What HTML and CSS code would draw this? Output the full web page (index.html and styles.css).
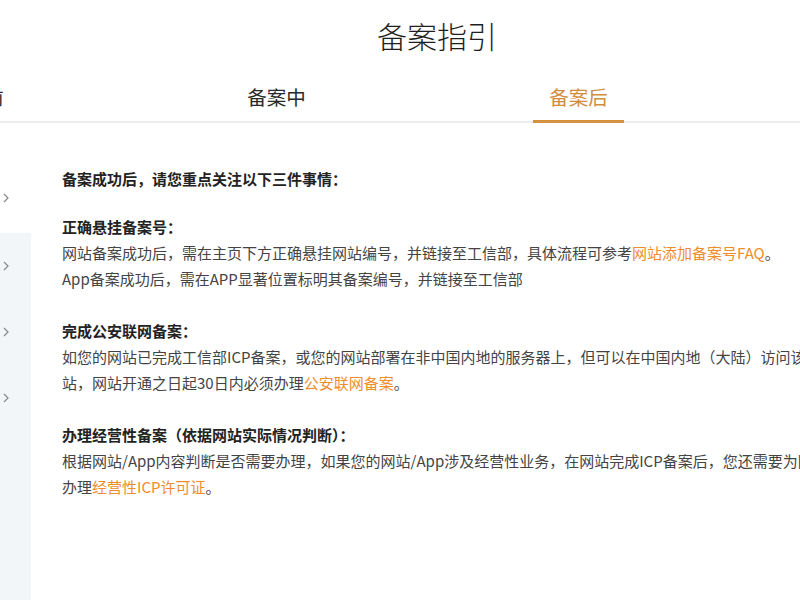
FILE: index.html
```html
<!DOCTYPE html>
<html lang="zh-CN">
<head>
<meta charset="utf-8">
<title>备案指引</title>
<link rel="stylesheet" href="styles.css">
</head>
<body>
<div class="page">
  <header class="header">
    <h1 class="title">备案指引</h1>
  </header>
  <nav class="tabs">
    <div class="tab">备案前</div>
    <div class="tab">备案中</div>
    <div class="tab active">备案后</div>
  </nav>
  <main class="main">
    <aside class="sidebar">
      <div class="side-top"><svg class="chev" viewBox="0 0 6 10" width="6" height="10"><path d="M1 1 L5 5 L1 9" fill="none" stroke="#888" stroke-width="1.2"/></svg></div>
      <div class="side-list">
        <div class="side-item"><svg class="chev" viewBox="0 0 6 10" width="6" height="10"><path d="M1 1 L5 5 L1 9" fill="none" stroke="#888" stroke-width="1.2"/></svg></div>
        <div class="side-item"><svg class="chev" viewBox="0 0 6 10" width="6" height="10"><path d="M1 1 L5 5 L1 9" fill="none" stroke="#888" stroke-width="1.2"/></svg></div>
        <div class="side-item"><svg class="chev" viewBox="0 0 6 10" width="6" height="10"><path d="M1 1 L5 5 L1 9" fill="none" stroke="#888" stroke-width="1.2"/></svg></div>
      </div>
    </aside>
    <section class="content">
      <p class="intro">备案成功后，请您重点关注以下三件事情：</p>
      <div class="block">
        <h3 class="block-title">正确悬挂备案号：</h3>
        <p>网站备案成功后，需在主页下方正确悬挂网站编号，并链接至工信部，具体流程可参考<a class="link">网站添加备案号FAQ</a>。</p>
        <p>App备案成功后，需在APP显著位置标明其备案编号，并链接至工信部</p>
      </div>
      <div class="block">
        <h3 class="block-title">完成公安联网备案：</h3>
        <p>如您的网站已完成工信部ICP备案，或您的网站部署在非中国内地的服务器上，但可以在中国内地（大陆）访问该网站，网站开通之日起30日内必须办理<a class="link">公安联网备案</a>。</p>
      </div>
      <div class="block">
        <h3 class="block-title">办理经营性备案（依据网站实际情况判断）：</h3>
        <p>根据网站/App内容判断是否需要办理，如果您的网站/App涉及经营性业务，在网站完成ICP备案后，您还需要为网站办理<a class="link">经营性ICP许可证</a>。</p>
      </div>
    </section>
  </main>
</div>
</body>
</html>
```

FILE: styles.css
```css
* { box-sizing: border-box; }
html, body {
  margin: 0;
  padding: 0;
  background: #ffffff;
  overflow: hidden;
  height: 600px;
}
body {
  font-family: "Noto Sans CJK SC", "Noto Sans", "Liberation Sans", sans-serif;
  color: #444;
}
.page {
  width: 900px;
  height: 600px;
}
.header {
  width: 874px;
  padding-top: 14px;
  text-align: center;
}
.title {
  margin: 0;
  font-size: 30px;
  line-height: 42px;
  font-weight: 300;
  color: #1f1f1f;
}
.tabs {
  display: flex;
  gap: 211px;
  margin-left: -71px;
  width: 972px;
  border-bottom: 2px solid #ececec;
  padding-top: 27px;
}
.tab {
  width: 91px;
  text-align: center;
  font-size: 19.5px;
  line-height: 28px;
  color: #2a2a2a;
  padding-bottom: 9px;
  border-bottom: 3px solid transparent;
  margin-bottom: -2px;
}
.tab.active {
  color: #d28c3e;
  border-bottom-color: #d4913f;
}
.main {
  display: flex;
  height: 477px;
}
.sidebar {
  width: 31px;
  flex: none;
  display: flex;
  flex-direction: column;
}
.side-top {
  height: 110px;
  display: flex;
  align-items: flex-end;
  padding-bottom: 30px;
}
.side-list {
  flex: 1;
  background: #f3f6f8;
}
.side-item {
  height: 66px;
  display: flex;
  align-items: center;
}
.chev {
  display: block;
  margin-left: 3px;
}
.content {
  width: 797px;
  flex: none;
  padding-left: 31px;
  padding-top: 43px;
  font-size: 15px;
  line-height: 26px;
}
.content p {
  margin: 0;
}
.intro {
  font-weight: 700;
  color: #222;
  margin-bottom: 22px !important;
}
.block {
  margin-bottom: 26px;
}
.block-title {
  margin: 0;
  font-size: 15px;
  line-height: 26px;
  font-weight: 700;
  color: #222;
}
.link {
  color: #ee8d2c;
  text-decoration: none;
}
```
